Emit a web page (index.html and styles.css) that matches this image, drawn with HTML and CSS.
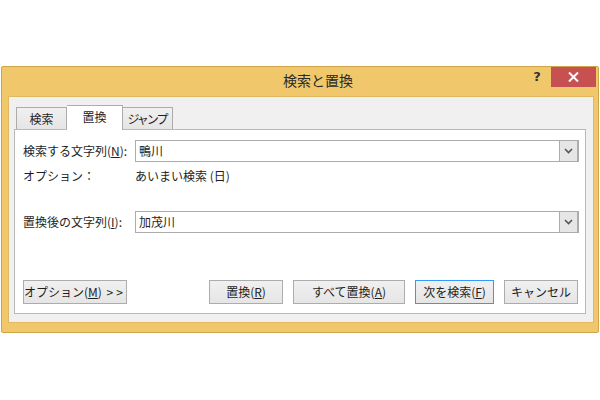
FILE: index.html
```html
<!DOCTYPE html>
<html lang="ja">
<head>
<meta charset="utf-8">
<title>検索と置換</title>
<link rel="stylesheet" href="styles.css">
</head>
<body>
<div class="window">
  <div class="titlebar">
    <div class="title">検索と置換</div>
    <div class="help">?</div>
    <div class="close">
      <svg width="11" height="10" viewBox="0 0 11 10"><path d="M1 0.5 L10 9.5 M10 0.5 L1 9.5" stroke="#fff" stroke-width="2"/></svg>
    </div>
  </div>
  <div class="client">
    <div class="tabs">
      <div class="tab">検索</div>
      <div class="tab active">置換</div>
      <div class="tab jump">ジャンプ</div>
    </div>
    <div class="panel">
      <div class="row">
        <div class="label">検索する文字列(<u>N</u>):</div>
        <div class="combo">
          <div class="value">鴨川</div>
          <div class="drop"><svg width="9" height="6" viewBox="0 0 9 6"><path d="M1 1 L4.5 4.5 L8 1" stroke="#555" stroke-width="1.6" fill="none"/></svg></div>
        </div>
      </div>
      <div class="row opt">
        <div class="label">オプション：</div>
        <div class="optval">あいまい検索 (日)</div>
      </div>
      <div class="row repl">
        <div class="label">置換後の文字列(<u>I</u>):</div>
        <div class="combo">
          <div class="value">加茂川</div>
          <div class="drop"><svg width="9" height="6" viewBox="0 0 9 6"><path d="M1 1 L4.5 4.5 L8 1" stroke="#555" stroke-width="1.6" fill="none"/></svg></div>
        </div>
      </div>
      <div class="buttons">
        <div class="btn b-opt">オプション(<u>M</u>) <span class="gt">&gt;&gt;</span></div>
        <div class="right">
          <div class="btn b-rep">置換(<u>R</u>)</div>
          <div class="btn b-all">すべて置換(<u>A</u>)</div>
          <div class="btn b-find default">次を検索(<u>F</u>)</div>
          <div class="btn b-cancel">キャンセル</div>
        </div>
      </div>
    </div>
  </div>
</div>
</body>
</html>
```
FILE: styles.css
```css
html, body {
  margin: 0;
  padding: 0;
  background: #ffffff;
}
body {
  font-family: "Noto Sans CJK JP", "Noto Sans", sans-serif;
  font-size: 12px;
  color: #1e1e1e;
  width: 600px;
  height: 400px;
  overflow: hidden;
}
.window {
  margin: 66px 0 0 1px;
  width: 598px;
  box-sizing: border-box;
  background: #f0c86b;
  border: 1px solid #cfa54c;
  border-radius: 2px;
  padding-bottom: 9px;
}
.titlebar {
  display: flex;
  height: 29px;
}
.title {
  flex: 1;
  text-align: center;
  padding-left: 110px;
  font-size: 14px;
  line-height: 27px;
  color: #2a2a2a;
}
.help {
  width: 26px;
  text-align: center;
  font-family: "DejaVu Sans", sans-serif;
  font-weight: bold;
  font-size: 13px;
  line-height: 20px;
  color: #333;
}
.close {
  width: 45px;
  height: 20px;
  margin-left: 1px;
  margin-right: 2px;
  background: #c75050;
  display: flex;
  align-items: center;
  justify-content: center;
}
.client {
  margin: 0 4px 0 6px;
  background: #f0f0f0;
  border: 1px solid #dfb862;
  padding: 8px 7px 8px 5px;
}
.tabs {
  display: flex;
  align-items: flex-end;
  height: 24px;
  padding-left: 2px;
}
.tab {
  height: 22px;
  box-sizing: border-box;
  border: 1px solid #acacac;
  border-bottom: none;
  background: linear-gradient(#f0f0f0, #e5e5e5);
  width: 51px;
  text-align: center;
  line-height: 21px;
  font-size: 12px;
}
.tab + .tab {
  border-left: none;
}
.tab.active {
  position: relative;
  z-index: 1;
  height: 25px;
  margin-bottom: -1px;
  width: 56px;
  background: #ffffff;
  line-height: 22px;
}
.tab.jump {
  width: 50px;
  letter-spacing: -2px;
  padding-right: 1px;
}
.panel {
  background: #ffffff;
  border: 1px solid #b9b9b9;
  padding: 10px 6px 9px 8px;
}
.row {
  display: flex;
  align-items: center;
}
.label {
  width: 112px;
  flex: none;
  line-height: 16px;
}
.combo {
  flex: 1;
  height: 22px;
  box-sizing: border-box;
  border: 1px solid #acacac;
  display: flex;
  background: #fff;
}
.value {
  flex: 1;
  padding-left: 3px;
  line-height: 19px;
}
.drop {
  width: 17px;
  background: #e6e6e6;
  border-left: 1px solid #acacac;
  border-right: 1px solid #acacac;
  display: flex;
  align-items: center;
  justify-content: center;
}
.opt {
  margin-top: 6px;
  height: 16px;
}
.optval {
  line-height: 16px;
}
.repl {
  margin-top: 27px;
}
.buttons {
  margin-top: 47px;
  display: flex;
  justify-content: space-between;
  padding-right: 1px;
}
.right {
  display: flex;
  gap: 10px;
}
.btn {
  height: 24px;
  box-sizing: border-box;
  border: 1px solid #acacac;
  background: linear-gradient(#f0f0f0, #e5e5e5);
  text-align: center;
  line-height: 21px;
}
.btn.default {
  border-color: #3399ff;
}
.gt {
  letter-spacing: 3px;
  margin-left: 2px;
}
.b-opt { width: 104px; }
.b-rep { width: 74px; }
.b-all { width: 112px; }
.b-find { width: 79px; }
.b-cancel { width: 74px; }
u {
  text-underline-offset: 1px;
}
```
